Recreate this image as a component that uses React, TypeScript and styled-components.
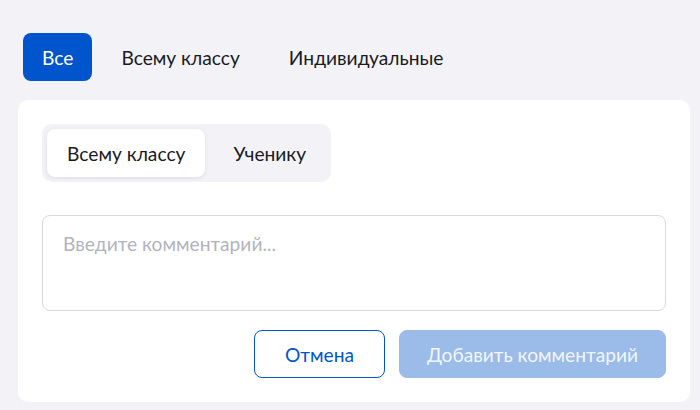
import { useState } from "react";
import styled, { createGlobalStyle } from "styled-components";

const GlobalStyle = createGlobalStyle`
	html, body {
		margin: 0;
		padding: 0;
		background: #f3f3f7;
		font-family: Lato, "Noto Sans", sans-serif;
		color: #1a1a24;
	}
	* { box-sizing: border-box; }
`

const Page = styled.div`
	width: 700px;
	height: 410px;
	padding: 33px 10px 8px 18px;
	display: flex;
	flex-direction: column;
	gap: 19px;
`

const FilterBar = styled.div`
	display: flex;
	gap: 9px;
	padding-left: 5px;
`

const FilterTab = styled.button<{ $active: boolean }>`
	height: 48px;
	padding: 0 ${(p) => (p.$active ? 19 : 20)}px;
	border: none;
	border-radius: 8px;
	font-family: inherit;
	font-size: 19.2px;
	cursor: pointer;
	background: ${(p) => (p.$active ? "#0055cc" : "transparent")};
	color: ${(p) => (p.$active ? "#ffffff" : "#1a1a24")};
`

const Card = styled.div`
	width: 672px;
	background: #ffffff;
	border-radius: 10px;
	padding: 24px;
	display: flex;
	flex-direction: column;
`

const Segment = styled.div`
	align-self: flex-start;
	display: flex;
	gap: 8px;
	padding: 5px;
	background: #f3f3f7;
	border-radius: 10px;
`

const SegmentItem = styled.button<{ $active: boolean }>`
	height: 48px;
	padding: 0 20px;
	border: none;
	border-radius: 8px;
	font-family: inherit;
	font-size: 19.2px;
	color: #1a1a24;
	cursor: pointer;
	background: ${(p) => (p.$active ? "#ffffff" : "transparent")};
	box-shadow: ${(p) => (p.$active ? "0 1px 4px rgba(20, 20, 50, 0.1)" : "none")};
`

const Comment = styled.textarea`
	margin-top: 33px;
	height: 96px;
	width: 100%;
	resize: none;
	border: 1px solid #d8d8e0;
	border-radius: 8px;
	padding: 16px 20px;
	font-family: inherit;
	font-size: 19.2px;
	line-height: 24px;
	color: #1a1a24;
	outline: none;
	&::placeholder {
		color: #b3b3bd;
	}
`

const Actions = styled.div`
	margin-top: 19px;
	display: flex;
	justify-content: flex-end;
	gap: 14px;
`

const Button = styled.button<{ $primary?: boolean }>`
	height: 48px;
	padding: 0 ${(p) => (p.$primary ? 27 : 30)}px;
	border-radius: 8px;
	font-family: inherit;
	font-size: 19.2px;
	cursor: pointer;
	border: 1px solid ${(p) => (p.$primary ? "#9bbbe8" : "#0055cc")};
	background: ${(p) => (p.$primary ? "#9bbbe8" : "#ffffff")};
	color: ${(p) => (p.$primary ? "#f2f6fc" : "#0055cc")};
	&:disabled {
		cursor: default;
	}
`

const filters = ["Все", "Всему классу", "Индивидуальные"];
const targets = ["Всему классу", "Ученику"];

const App = () => {
	const [filter, setFilter] = useState<string>("Все");
	const [target, setTarget] = useState<string>("Всему классу");
	const [text, setText] = useState<string>("");

	return (
		<>
			<GlobalStyle />
			<Page>
				<FilterBar>
					{filters.map((f) => (
						<FilterTab key={f} $active={f === filter} onClick={() => setFilter(f)}>
							{f}
						</FilterTab>
					))}
				</FilterBar>
				<Card>
					<Segment>
						{targets.map((t) => (
							<SegmentItem key={t} $active={t === target} onClick={() => setTarget(t)}>
								{t}
							</SegmentItem>
						))}
					</Segment>
					<Comment
						placeholder="Введите комментарий..."
						value={text}
						onChange={(e) => setText(e.target.value)}
					/>
					<Actions>
						<Button onClick={() => setText("")}>Отмена</Button>
						<Button $primary disabled={!text}>Добавить комментарий</Button>
					</Actions>
				</Card>
			</Page>
		</>
	)
}

export default App;
